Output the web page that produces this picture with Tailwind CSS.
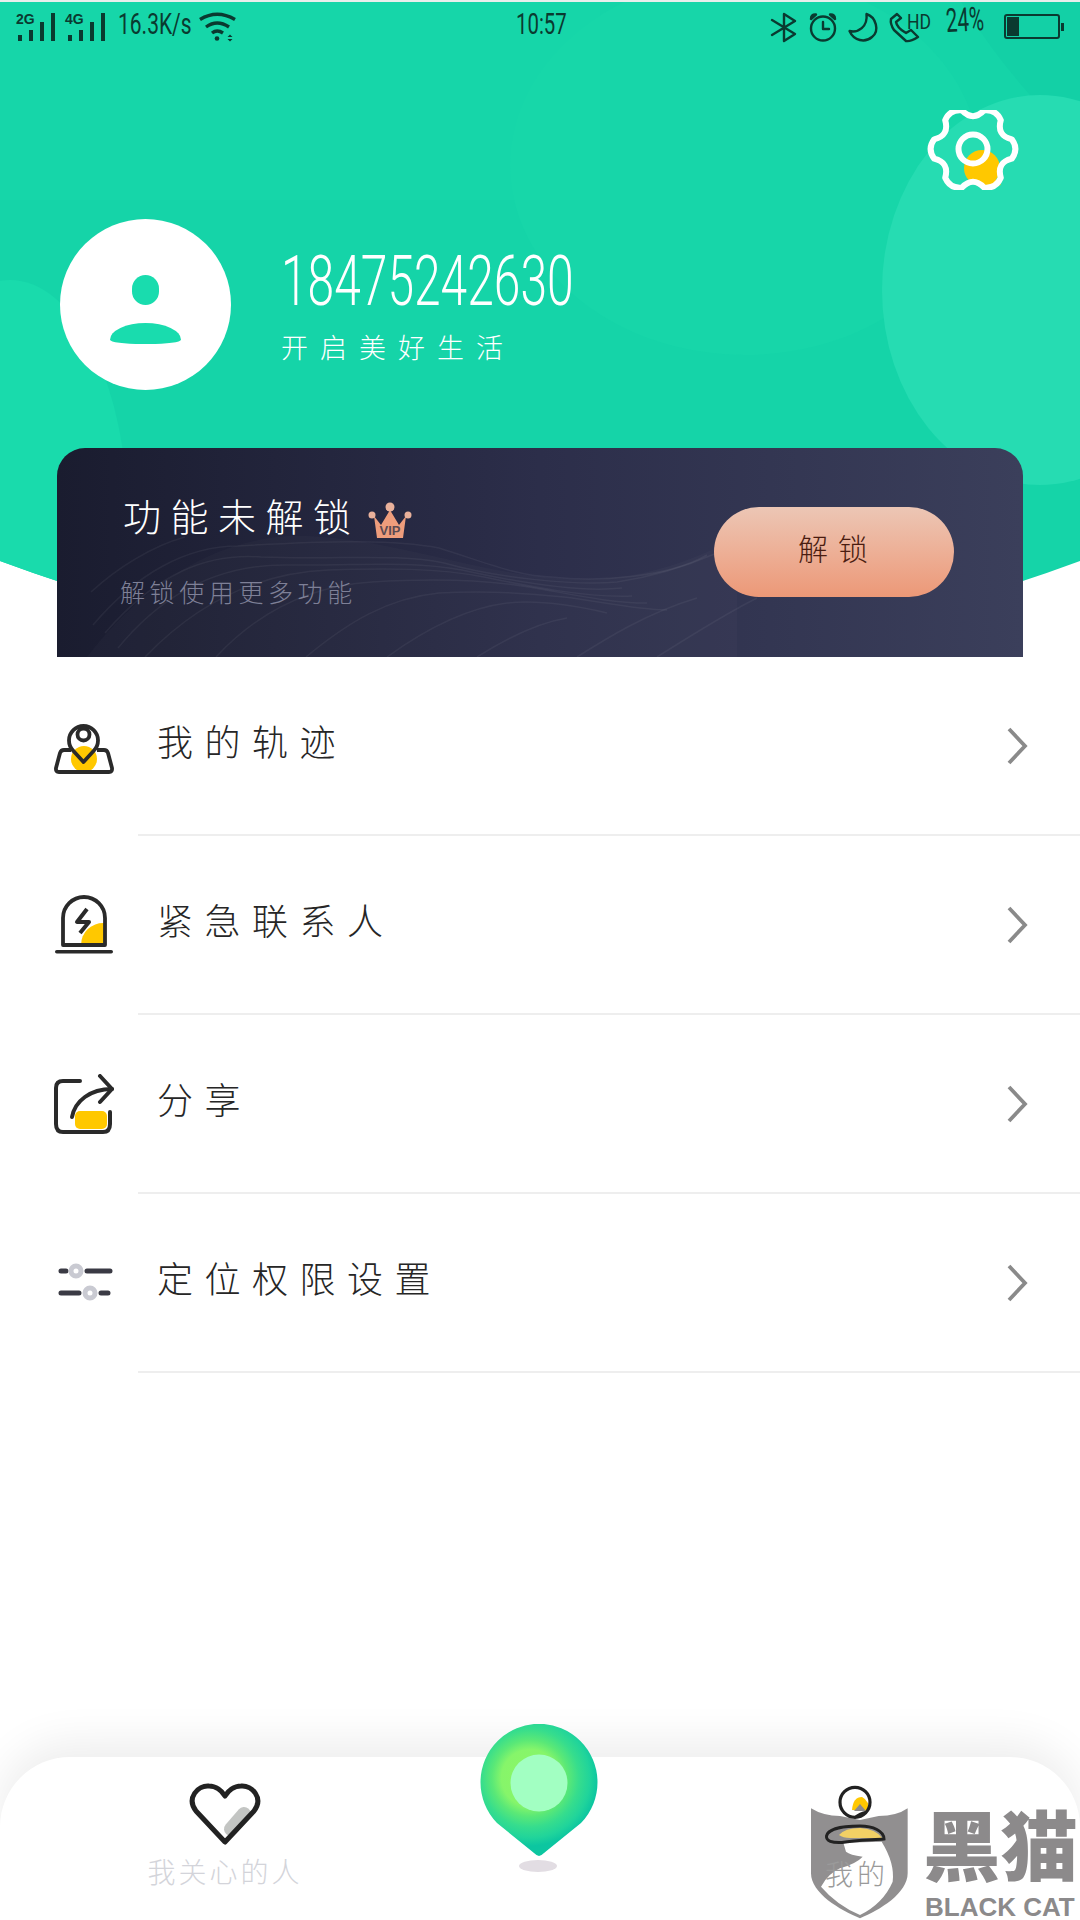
<!DOCTYPE html>
<html lang="zh">
<head>
<meta charset="utf-8">
<script src="https://cdn.jsdelivr.net/npm/@tailwindcss/browser@4"></script>
</head>
<body class="m-0 bg-white">
<div class="relative flex flex-col w-[1080px] h-[1920px] overflow-hidden bg-white font-['Noto_Sans_CJK_SC','Noto_Sans',sans-serif]">

  <!-- header -->
  <header class="relative h-[657px] shrink-0">
    <svg class="absolute inset-0 w-[1080px] h-[657px]" viewBox="0 0 1080 657">
      <defs>
        <clipPath id="hdr"><path d="M0 2H1080V561Q540 761 0 561Z"/></clipPath>
      </defs>
      <rect width="1080" height="3" fill="#e9eeec"/>
      <g clip-path="url(#hdr)">
        <rect width="1080" height="657" fill="#15d4a8"/>
        <ellipse cx="745" cy="165" rx="235" ry="190" fill="#17d6a9"/>
        <path d="M960 0 Q990 50 1030 95 Q1060 110 1080 140 V0Z" fill="#13d0a6"/>
        <rect x="0" y="0" width="600" height="200" fill="#18d7aa" fill-opacity=".6"/>
        <ellipse cx="1040" cy="290" rx="158" ry="195" fill="#26dcb2"/>
        <ellipse cx="10" cy="520" rx="118" ry="240" fill="#19dbac"/>
      </g>
    </svg>

    <div class="relative flex flex-col">
      <!-- status bar -->
      <div class="relative h-[50px] text-[#0a3a30]">
        <svg class="absolute left-[15px] top-[10px] w-[100px] h-[34px]" viewBox="0 0 100 34" fill="#0a3a30">
          <rect x="3" y="25" width="4" height="6"/><rect x="14" y="20" width="4" height="11"/><rect x="25" y="12" width="4" height="19"/><rect x="36" y="3" width="4" height="28"/>
          <rect x="53" y="25" width="4" height="6"/><rect x="64" y="20" width="4" height="11"/><rect x="75" y="12" width="4" height="19"/><rect x="86" y="3" width="4" height="28"/>
        </svg>
        <span class="absolute left-[16px] top-[11px] text-[14px] leading-[16px] font-bold font-['Liberation_Sans',sans-serif]">2G</span>
        <span class="absolute left-[65px] top-[11px] text-[14px] leading-[16px] font-bold font-['Liberation_Sans',sans-serif]">4G</span>
        <span class="absolute left-[118px] top-[6px] text-[30px] leading-[36px] font-normal font-['Roboto',sans-serif] scale-x-[.7] origin-left whitespace-nowrap">16.3K/s</span>
        <svg class="absolute left-[199px] top-[12px] w-[38px] h-[30px]" viewBox="0 0 38 30" fill="none" stroke="#0a3a30" stroke-width="3.400">
          <path d="M1 7.500Q18 -3 36 7.500"/><path d="M7 15Q18 7 30 15"/><path d="M13 21Q18 17 24 21"/>
          <circle cx="18" cy="26.500" r="2.300" fill="#0a3a30" stroke="none"/><path d="M31 22.500l-2.500 2.500h5zM31 29.500l-2.500-2.500h5z" fill="#0a3a30" stroke="none"/>
        </svg>
        <span class="absolute left-[516px] top-[6px] text-[30px] leading-[36px] font-normal font-['Roboto',sans-serif] scale-x-[.68] origin-left">10:57</span>

        <svg class="absolute left-[770px] top-[12px] w-[164px] h-[32px]" viewBox="0 0 164 32" fill="none" stroke="#0a3a30" stroke-width="2.400" stroke-linejoin="round" stroke-linecap="round">
          <path d="M2 8L25 22L14 29V2L25 9L2 23"/>
          <circle cx="53" cy="16.500" r="12"/><path d="M53 10V17H59"/>
          <path d="M41 7Q41 2 46 2.500ZM65 7Q65 2 60 2.500Z" fill="#0a3a30"/>
          <path d="M96.500 2C106 5 110 19 102 25C95 31 84 29 79.500 19C88 21 98 15 96.500 2Z"/>
          <path d="M127 2L121 7Q120 12 124 18L136 29Q140 30 148 25L141 18L136 21Q127 16 126 10L131 6Z"/>
        </svg>
        <span class="absolute left-[907px] top-[12px] text-[20px] leading-[20px] font-normal font-['Roboto',sans-serif] scale-x-[.88] origin-left">HD</span>
        <span class="absolute left-[946px] top-[3px] text-[33px] leading-[36px] font-normal font-['Roboto',sans-serif] scale-x-[.62] origin-left -rotate-3 whitespace-nowrap">24%</span>
        <div class="absolute left-[1004px] top-[14px] w-[56px] h-[25px] rounded-[3px] border-2 border-[#0a3a30] p-[1px]">
          <div class="w-[12px] h-full bg-[#0a3a30]"></div>
        </div>
        <div class="absolute left-[1061px] top-[23px] w-[3px] h-[8px] bg-[#0a3a30]"></div>
      </div>

      <!-- settings -->
      <div class="flex justify-end pr-[61px] mt-[60px] h-[80px]">
        <svg class="w-[92px] h-[80px]" viewBox="-46 -39 92 80">
          <circle cx="9" cy="19" r="18" fill="#ffc800"/>
          <path d="M18 25L28 36L10 40Z" fill="#ffc800"/>
          <path fill="none" stroke="#fff" stroke-width="6" stroke-linejoin="round" d="M38.800 -9.700Q46 0 38.800 9.700Q23.400 13.500 27.800 28.800Q23 39.800 11 38.500Q0 27 -11 38.500Q-23 39.800 -27.800 28.800Q-23.400 13.500 -38.800 9.700Q-46 0 -38.800 -9.700Q-23.400 -13.500 -27.800 -28.800Q-23 -39.800 -11 -38.500Q0 -27 11 -38.500Q23 -39.800 27.800 -28.800Q23.400 -13.500 38.800 -9.700Z"/>
          <circle cx="0" cy="0" r="14.500" fill="none" stroke="#fff" stroke-width="6"/>
        </svg>
      </div>

      <!-- profile -->
      <div class="flex items-start pl-[60px] mt-[29px] h-[229px]">
        <div class="flex flex-col items-center w-[171px] h-[171px] rounded-full bg-white">
          <div class="w-[27px] h-[30px] mt-[56px] rounded-full bg-[#19dcae]"></div>
          <div class="w-[71px] h-[21px] mt-[18px] rounded-[50%_50%_45%_45%/80%_80%_20%_20%] bg-[#19dcae]"></div>
        </div>
        <div class="flex flex-col ml-[50px] text-white">
          <span class="h-[76px] mt-[24px] text-[70px] leading-[76px] font-light font-['Roboto',sans-serif] scale-x-[.685] origin-left whitespace-nowrap">18475242630</span>
          <span class="mt-[8px] text-[27px] leading-[40px] font-light tracking-[12px] whitespace-nowrap">开启美好生活</span>
        </div>
      </div>

      <!-- unlock card -->
      <div class="relative flex items-start justify-between w-[966px] h-[209px] ml-[57px] rounded-t-[28px] overflow-hidden bg-gradient-to-r from-[#1a1c2f] via-[#2c2e4a] to-[#3b3f5b]">
        <svg class="absolute inset-0 w-[966px] h-[209px]" viewBox="0 0 966 209" fill="none" stroke="#fff" stroke-opacity=".05" stroke-width="1.500">
          <path d="M30 209C90 130 170 85 250 88C340 92 420 125 500 130C570 135 620 120 680 90V209Z" fill="#fff" fill-opacity=".018" stroke="none"/>
          <path d="M34 144C60 120 95 98 128 89"/>
          <path d="M36 177C80 125 130 98 181 98C280 92 340 92 382 100C430 115 460 128 494 129C540 134 610 130 650 107"/>
          <path d="M48 185C100 125 150 105 204 109C280 112 340 105 387 115C440 130 520 138 560 134C600 128 630 118 660 105"/>
          <path d="M61 200C110 140 170 115 235 117C300 118 350 112 405 122C450 132 520 145 565 140"/>
          <path d="M88 209C140 155 200 125 271 122C330 120 380 120 427 129C470 138 530 150 575 148"/>
          <path d="M159 209C200 165 250 138 315 134C380 130 430 132 472 139C510 145 550 155 590 155"/>
          <path d="M249 209C290 175 330 150 382 145C430 142 470 145 507 149C540 153 580 162 610 162"/>
          <path d="M330 209C370 180 410 160 450 155C480 152 520 158 550 165"/>
          <path d="M420 209C450 190 480 175 510 170"/>
          <path d="M520 209C550 190 590 165 640 150"/>
          <path d="M600 209C630 190 670 165 700 150"/>
        </svg>
        <div class="relative flex flex-col pl-[66px]">
          <div class="flex items-center mt-[37px] h-[60px]">
            <span class="text-[38px] leading-[44px] font-light text-white tracking-[9.500px] whitespace-nowrap">功能未解锁</span>
            <svg class="ml-[7px] mt-[10px] w-[44px] h-[36px]" viewBox="0 0 44 36">
              <path d="M6 14L13 23L22 8L31 23L38 14L35 36H9Z" fill="#ee9d7c"/>
              <circle cx="22" cy="5" r="4.500" fill="#e9b19b"/><circle cx="4" cy="13" r="3.500" fill="#e9b19b"/><circle cx="40" cy="13" r="3.500" fill="#e9b19b"/>
              <text x="22" y="33" font-size="13" font-weight="700" text-anchor="middle" fill="#5b4a52" font-family="Liberation Sans">VIP</text>
            </svg>
          </div>
          <span class="relative -left-[3px] mt-[29px] text-[25px] leading-[34px] font-light text-[#7e8097] tracking-[4.600px] whitespace-nowrap">解锁使用更多功能</span>
        </div>
        <div class="relative flex items-center justify-center mt-[59px] mr-[69px] w-[240px] h-[90px] rounded-[45px] bg-gradient-to-b from-[#ecc6b5] to-[#ec9877] text-[30px] font-light tracking-[10px] text-[#4a1c10] pl-[8px] pb-[10px]">解锁</div>
      </div>
    </div>
  </header>

  <!-- list -->
  <main class="flex flex-col shrink-0 text-[#262626]">
    <div class="flex flex-col">
      <div class="flex items-center h-[177px] pl-[54px] pr-[51px]">
        <svg class="w-[60px] h-[58px] shrink-0" viewBox="0 0 60 58" fill="none" stroke="#2a2a2a" stroke-width="3.800" stroke-linejoin="round">
          <circle cx="30" cy="42" r="13" fill="#ffc800" stroke="none"/>
          <path d="M17 33H10Q7 33 6 36L2 51Q1.500 55 5 55H55Q58.500 55 58 51L54 36Q53 33 50 33H43"/>
          <path d="M29.500 45L19 33.500A14.500 14.500 0 1 1 40 33.500Z"/>
          <circle cx="29.500" cy="17.500" r="6"/>
        </svg>
        <span class="ml-[43px] -mt-[12px] text-[36px] leading-[48px] font-light tracking-[11.500px]">我的轨迹</span>
        <svg class="ml-auto w-[24px] h-[38px]" viewBox="0 0 24 38" fill="none" stroke="#8a8a8a" stroke-width="3.800"><path d="M4 2L20 19L4 36"/></svg>
      </div>
      <div class="h-[2px] ml-[138px] bg-[#eeeeee]"></div>
    </div>
    <div class="flex flex-col">
      <div class="flex items-center h-[177px] pl-[54px] pr-[51px]">
        <svg class="w-[60px] h-[60px] shrink-0" viewBox="0 0 60 60" fill="none" stroke="#2a2a2a" stroke-width="3.800" stroke-linejoin="round">
          <path d="M27 50A22 22 0 0 1 50 28V50Z" fill="#ffc800" stroke="none"/>
          <path d="M9 50V23A21 21 0 0 1 51 23V50Z"/>
          <path d="M33 14L23 27H35L26 38" stroke-width="4"/>
          <rect x="1" y="55" width="58" height="3.500" rx="1.750" fill="#2a2a2a" stroke="none"/>
        </svg>
        <span class="ml-[43px] -mt-[12px] text-[36px] leading-[48px] font-light tracking-[11.500px]">紧急联系人</span>
        <svg class="ml-auto w-[24px] h-[38px]" viewBox="0 0 24 38" fill="none" stroke="#8a8a8a" stroke-width="3.800"><path d="M4 2L20 19L4 36"/></svg>
      </div>
      <div class="h-[2px] ml-[138px] bg-[#eeeeee]"></div>
    </div>
    <div class="flex flex-col">
      <div class="flex items-center h-[177px] pl-[54px] pr-[51px]">
        <svg class="w-[60px] h-[60px] shrink-0" viewBox="0 0 60 60" fill="none" stroke="#2a2a2a" stroke-width="4" stroke-linecap="round" stroke-linejoin="round">
          <path d="M26 7H9Q2 7 2 14V50Q2 58 9 58H49Q56 58 56 50V38"/>
          <path d="M18 43C21 27 36 15 58 15"/>
          <path d="M46 2L58 15L46 28"/>
          <rect x="21" y="37" width="32" height="18" rx="5" fill="#ffc800" stroke="none"/>
        </svg>
        <span class="ml-[43px] -mt-[12px] text-[36px] leading-[48px] font-light tracking-[11.500px]">分享</span>
        <svg class="ml-auto w-[24px] h-[38px]" viewBox="0 0 24 38" fill="none" stroke="#8a8a8a" stroke-width="3.800"><path d="M4 2L20 19L4 36"/></svg>
      </div>
      <div class="h-[2px] ml-[138px] bg-[#eeeeee]"></div>
    </div>
    <div class="flex flex-col">
      <div class="flex items-center h-[177px] pl-[54px] pr-[51px]">
        <svg class="w-[60px] h-[40px] shrink-0" viewBox="0 0 60 40" fill="none" stroke-width="5" stroke-linecap="round">
          <path d="M7 8H12M33 8H56M7 30H25M47 30H54" stroke="#3a3a44"/>
          <circle cx="22" cy="8" r="5" stroke="#c9cad2"/>
          <circle cx="36" cy="30" r="5" stroke="#c9cad2"/>
        </svg>
        <span class="ml-[43px] -mt-[12px] text-[36px] leading-[48px] font-light tracking-[11.500px]">定位权限设置</span>
        <svg class="ml-auto w-[24px] h-[38px]" viewBox="0 0 24 38" fill="none" stroke="#8a8a8a" stroke-width="3.800"><path d="M4 2L20 19L4 36"/></svg>
      </div>
      <div class="h-[2px] ml-[138px] bg-[#eeeeee]"></div>
    </div>
  </main>

  <div class="grow"></div>

  <!-- bottom nav -->
  <nav class="relative grid grid-cols-[450px_180px_450px] h-[163px] shrink-0 rounded-t-[70px] bg-white shadow-[0_-14px_44px_rgba(0,0,0,0.075)]">
    <div class="flex flex-col items-center pt-[26px]">
      <svg class="w-[72px] h-[62px]" viewBox="0 0 72 62" fill="none">
        <path d="M42 46L55 31" stroke="#c3c5c3" stroke-width="14" stroke-linecap="round"/>
        <path d="M36 59L7 28C-3 15 9 2 20 3C27 3 33 8 36 13C39 8 45 3 52 3C63 2 75 15 65 28Z" stroke="#222" stroke-width="5" stroke-linejoin="round"/>
      </svg>
      <span class="mt-[10px] text-[28px] leading-[32px] font-light tracking-[3px] text-[#d3d4da] whitespace-nowrap">我关心的人</span>
    </div>
    <div></div>
    <div class="relative z-10 flex flex-col items-center pt-[26px]">
      <svg class="w-[64px] h-[62px]" viewBox="0 0 64 62" fill="none">
        <circle cx="32" cy="19.300" r="15" fill="#fff"/>
        <path d="M29 27Q30 14 39 14Q47 18 45 28Z" fill="#ffc800"/>
        <path d="M37 21L31 28H43Z" fill="#8c8a8b"/>
        <circle cx="32" cy="19.300" r="15" stroke="#222" stroke-width="3.200"/>
        <path d="M31.700 34.500Q37 30 43.700 29" stroke="#222" stroke-width="2.600"/>
        <path d="M16 52Q22 45 37 45Q53 46 59 55H27Q20 55 16 52Z" fill="#ffd95e" fill-opacity=".88"/>
        <path d="M3.500 53C5 45 23 43 37 43C50 43 61 48 61 56C50 57 33 57 19 59.500C9 60 3 58 3.500 53Z" stroke="#222" stroke-width="3"/>
      </svg>
      <span class="mt-[12px] pl-[4px] text-[28px] leading-[32px] font-light tracking-[4px] text-[#9a9a9a]">我的</span>
    </div>

    <!-- location pin, overlapping the bar -->
    <svg class="absolute left-[480px] -top-[33px] w-[118px] h-[150px]" viewBox="0 0 118 150">
      <defs>
        <radialGradient id="pin" gradientUnits="userSpaceOnUse" cx="50" cy="54" r="68">
          <stop offset="0" stop-color="#8df765"/>
          <stop offset=".42" stop-color="#86f56a"/>
          <stop offset=".56" stop-color="#5ae877"/>
          <stop offset=".72" stop-color="#36dd8d"/>
          <stop offset=".88" stop-color="#20d49b"/>
          <stop offset="1" stop-color="#0cc6a0"/>
        </radialGradient>
      </defs>
      <path d="M59 132Q57 132 54 129L17 99A58.500 58.500 0 1 1 101 99L64 129Q61 132 59 132Z" fill="url(#pin)"/>
      <circle cx="59" cy="59" r="28.500" fill="#a2ffc2"/>
      <ellipse cx="58" cy="142" rx="19" ry="6" fill="#e2dde3"/>
    </svg>
  </nav>

  <!-- watermark -->
  <div class="absolute left-[760px] top-[1740px] w-[320px] h-[180px]">
    <svg class="absolute inset-0 w-[320px] h-[180px]" viewBox="0 0 960 540">
      <path d="M153 205Q190 228 240 228L300 240L356 228Q410 228 443 205V400C443 460 360 510 300 535C240 510 153 460 153 400Z" fill="#8c8a8b" fill-opacity=".96"/>
      <path d="M250 308L365 305Q405 370 398 425Q370 490 300 525Q230 495 183 440Q205 400 240 385Q290 370 308 350Q270 345 258 335Z" fill="#fff"/>
    </svg>
    <span class="absolute left-[163px] top-[64px] text-[76px] leading-[76px] font-black text-[#8c8a8b] scale-x-[1.02] origin-left whitespace-nowrap">黑猫</span>
    <span class="absolute left-[165px] top-[154px] text-[26px] leading-[26px] font-bold text-[#8c8a8b] whitespace-nowrap font-['Liberation_Sans',sans-serif]">BLACK CAT</span>
  </div>
</div>
</body>
</html>
